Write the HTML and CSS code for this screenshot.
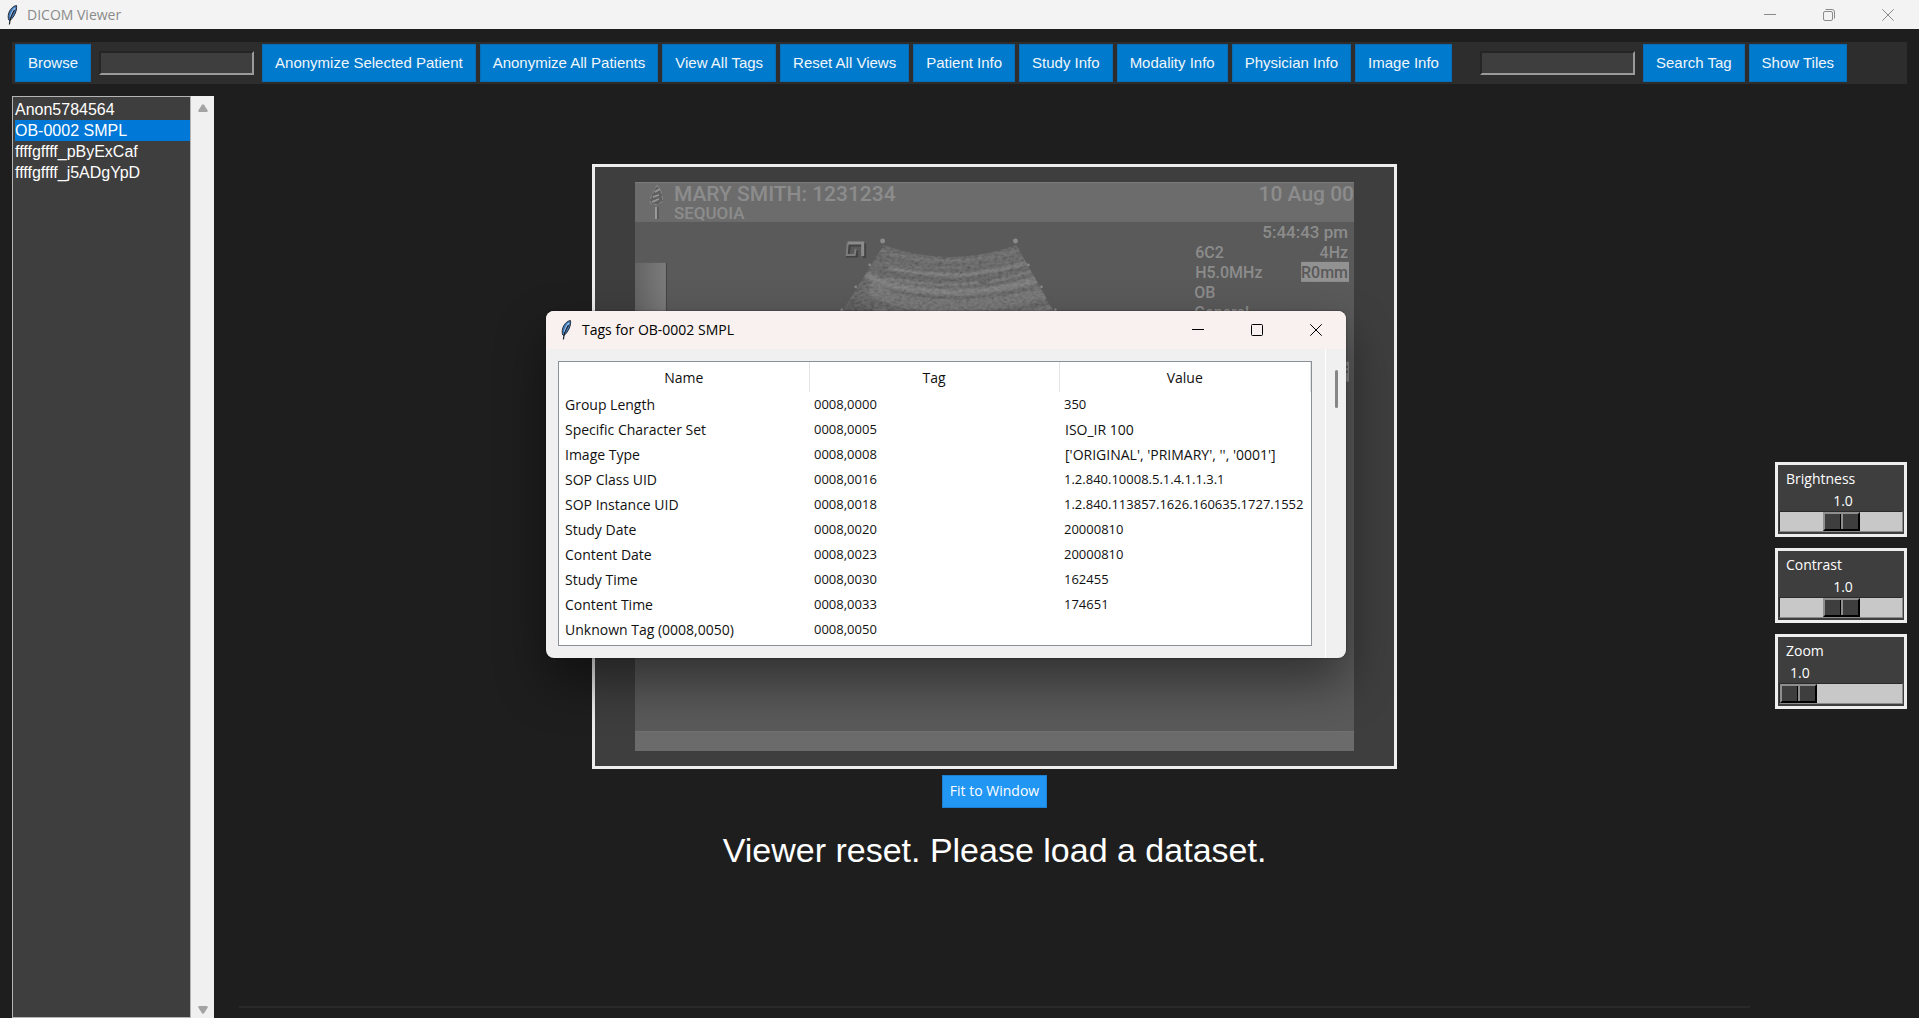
FILE: index.html
```html
<!DOCTYPE html>
<html lang="en">
<head>
<meta charset="utf-8">
<title>DICOM Viewer</title>
<link rel="stylesheet" href="styles.css">
</head>
<body>
<svg class="defs" aria-hidden="true">
  <symbol id="feather" viewBox="0 0 12 20">
    <path d="M10.500 .5C7 1 3.500 4.500 2.500 9c-.4 2-.5 4 .3 6L4 15.500C7 13 9.500 9 10.300 5c.3-1.700.5-3 .2-4.500z" fill="#3f78b8" stroke="#28303c" stroke-width="1"/>
    <path d="M9 3C7 5 5.500 8 4.500 12" stroke="#9cc4ee" stroke-width="1.500" fill="none"/>
    <path d="M8.500 5C6 9 4 13 3.400 19.500" stroke="#1c2028" stroke-width="1.200" fill="none"/>
  </symbol>
  <symbol id="minimize" viewBox="0 0 12 12"><path d="M0 5.500h12" stroke="currentColor"/></symbol>
  <symbol id="maximize" viewBox="0 0 12 12"><rect x=".5" y=".5" width="11" height="11" rx="1" fill="none" stroke="currentColor"/></symbol>
  <symbol id="restore" viewBox="0 0 12 12"><rect x=".5" y="2.500" width="9" height="9" rx="1.500" fill="none" stroke="currentColor"/><path d="M2.500 .5H9a2.500 2.500 0 0 1 2.500 2.500v6.500" fill="none" stroke="currentColor"/></symbol>
  <symbol id="close" viewBox="0 0 12 12"><path d="M.3 .3l11.400 11.400M11.700 .3L.3 11.700" stroke="currentColor"/></symbol>
</svg>

<header class="titlebar">
  <svg class="app-icon"><use href="#feather"/></svg>
  <h1 class="title">DICOM Viewer</h1>
  <div class="window-controls">
    <button aria-label="Minimize"><svg><use href="#minimize"/></svg></button>
    <button aria-label="Restore"><svg><use href="#restore"/></svg></button>
    <button aria-label="Close"><svg><use href="#close"/></svg></button>
  </div>
</header>

<nav class="toolbar">
  <button class="tool">Browse</button>
  <input class="entry" type="text" aria-label="Dataset path">
  <div class="tool-group">
    <button class="tool">Anonymize Selected Patient</button>
    <button class="tool">Anonymize All Patients</button>
    <button class="tool">View All Tags</button>
    <button class="tool">Reset All Views</button>
    <button class="tool">Patient Info</button>
    <button class="tool">Study Info</button>
    <button class="tool">Modality Info</button>
    <button class="tool">Physician Info</button>
    <button class="tool">Image Info</button>
  </div>
  <input class="entry search" type="text" aria-label="Tag to search">
  <div class="tool-group">
    <button class="tool">Search Tag</button>
    <button class="tool">Show Tiles</button>
  </div>
</nav>

<main class="workspace">
  <aside class="patients">
    <ul class="patient-list">
      <li>Anon5784564</li>
      <li class="selected">OB-0002 SMPL</li>
      <li>ffffgffff_pByExCaf</li>
      <li>ffffgffff_j5ADgYpD</li>
    </ul>
    <div class="list-scroll">
      <svg viewBox="0 0 10 8"><path d="M4 .8Q5-.4 6 .8L9.700 6.500Q10 8 8.500 8h-7Q0 8 .3 6.500z" fill="#a3a3a3"/></svg>
      <svg viewBox="0 0 10 8"><path d="M4 7.200Q5 8.400 6 7.200L9.700 1.500Q10 0 8.500 0h-7Q0 0 .3 1.500z" fill="#a3a3a3"/></svg>
    </div>
  </aside>

  <section class="viewer">
    <div class="canvas">
      <svg class="scan" viewBox="0 0 720 570" role="img" aria-label="Ultrasound image">
        <defs>
          <linearGradient id="bar"><stop offset="0" stop-color="#646464"/><stop offset="1" stop-color="#7b7b7b"/></linearGradient>
          <filter id="speckle" x="0" y="0" width="1" height="1">
            <feTurbulence type="fractalNoise" baseFrequency=".25 .4" numOctaves="3" seed="4"/>
            <feColorMatrix values="1 0 0 0 -.1 1 0 0 0 -.1 1 0 0 0 -.1 0 0 0 0 1"/>
          </filter>
          <filter id="soft"><feGaussianBlur stdDeviation="1.200"/></filter>
          <clipPath id="fan"><path d="M249 63Q316 87 382 63L425 140H201z"/></clipPath>
        </defs>
        <rect width="720" height="570" fill="#5a5a5a"/>
        <rect width="720" height="40" fill="#6c6c6c"/>
        <path d="M0 .5h720" stroke="#7a7a7a"/>
        <rect y="550" width="720" height="20" fill="#6b6b6b"/>
        <path d="M0 550.500h720" stroke="#747474"/>
        <rect y="81" width="31" height="60" fill="url(#bar)"/>
        <path d="M31.500 81v60" stroke="#444"/>
        <g clip-path="url(#fan)">
          <rect x="200" y="60" width="230" height="80" fill="#595959"/>
          <g fill="none" stroke="#7c7c7c" filter="url(#soft)">
            <path d="M245 69Q316 90 386 68" stroke="#6a6a6a" stroke-width="3"/>
            <path d="M240 80Q316 94 392 75" stroke="#666" stroke-width="2"/>
            <path d="M254 86Q290 94 330 93Q370 88 396 80" stroke-width="3"/>
            <path d="M250 96Q300 106 345 101" stroke-width="2"/>
            <path d="M355 100Q385 94 402 88" stroke-width="2"/>
            <path d="M232 92Q246 104 285 108Q345 116 410 96" stroke-width="7" stroke="#767676"/>
            <path d="M234 105Q260 124 320 124Q380 122 418 108" stroke-width="13" stroke="#6c6c6c"/>
            <path d="M240 132Q320 146 424 128" stroke-width="12" stroke="#686868"/>
          </g>
          <path d="M200 118Q226 112 250 140H196z" fill="#505050" filter="url(#soft)"/>
          <rect x="200" y="60" width="230" height="80" filter="url(#speckle)" opacity=".2"/>
        </g>
        <g fill="#8a8a8a">
          <circle cx="248" cy="59" r="2.500"/><circle cx="381" cy="59" r="2.500"/>
          <circle cx="235" cy="83" r="1.300"/><circle cx="221" cy="105" r="1.300"/><circle cx="207" cy="128" r="1.300"/>
          <circle cx="394" cy="83" r="1.300"/><circle cx="407" cy="105" r="1.300"/><circle cx="421" cy="128" r="1.300"/>
        </g>
        <path d="M229 75V62h-15l-2 11h9v-6" fill="none" stroke="#434343" stroke-width="3" transform="translate(1 1)"/>
        <path d="M213 61h15v13" fill="none" stroke="#8c8c8c" stroke-width="3"/>
        <path d="M213 61l-1 12h8l1-6" fill="none" stroke="#7c7c7c" stroke-width="2"/>
        <path d="M22 3l4 6 1 5 1 5-6 4-7-2 1-6 3-6z" fill="#606060" stroke="#888" stroke-width="1" stroke-dasharray="4 2"/>
        <path d="M20 10l5-3M18 15l6-2M17 20l7-3" stroke="#999" stroke-width="1.500"/>
        <path d="M21 25v12" stroke="#999" stroke-width="2"/><path d="M23 25v12" stroke="#484848"/>
        <g class="scan-text">
          <text class="scan-large" x="39" y="19">MARY SMITH: 1231234</text>
          <text class="scan-medium" x="39" y="37">SEQUOIA</text>
          <text class="scan-large" x="720" y="19" text-anchor="end">10 Aug 00</text>
          <text class="scan-medium" x="714" y="56" text-anchor="end">5:44:43 pm</text>
          <text class="scan-small" x="561" y="76">6C2</text>
          <text class="scan-small" x="714" y="76" text-anchor="end">4Hz</text>
          <text class="scan-small" x="561" y="96">H5.0MHz</text>
          <rect x="667" y="80" width="48" height="20" fill="#929292"/>
          <text class="scan-small dark" x="714" y="96" text-anchor="end">R0mm</text>
          <text class="scan-small" x="560" y="116">OB</text>
          <text class="scan-small" x="560" y="136">General</text>
        </g>
        <rect x="706" y="180" width="9" height="20" fill="#8a8a8a"/>
        <path d="M712 185h2M712 190h2" stroke="#5a5a5a" stroke-width="2"/>
      </svg>
    </div>
    <button class="fit">Fit to Window</button>
    <p class="status">Viewer reset. Please load a dataset.</p>
  </section>

  <aside class="adjust">
    <div class="scale">
      <label for="brightness">Brightness</label>
      <output class="mid" for="brightness">1.0</output>
      <input id="brightness" type="range" min="0" max="2" step="0.1" value="1">
    </div>
    <div class="scale">
      <label for="contrast">Contrast</label>
      <output class="mid" for="contrast">1.0</output>
      <input id="contrast" type="range" min="0" max="2" step="0.1" value="1">
    </div>
    <div class="scale">
      <label for="zoom">Zoom</label>
      <output for="zoom">1.0</output>
      <input id="zoom" type="range" min="1" max="5" step="0.1" value="1">
    </div>
  </aside>
</main>

<section class="dialog" role="dialog" aria-labelledby="dialog-title">
  <header class="dialog-bar">
    <svg class="app-icon"><use href="#feather"/></svg>
    <h2 class="title" id="dialog-title">Tags for OB-0002 SMPL</h2>
    <div class="window-controls">
      <button aria-label="Minimize"><svg><use href="#minimize"/></svg></button>
      <button aria-label="Maximize"><svg><use href="#maximize"/></svg></button>
      <button aria-label="Close"><svg><use href="#close"/></svg></button>
    </div>
  </header>
  <div class="dialog-body">
    <div class="tree">
      <table>
        <thead><tr><th class="col">Name</th><th class="col">Tag</th><th>Value</th></tr></thead>
        <tbody>
          <tr><td>Group Length</td><td class="num">0008,0000</td><td class="num">350</td></tr>
          <tr><td>Specific Character Set</td><td class="num">0008,0005</td><td>ISO_IR 100</td></tr>
          <tr><td>Image Type</td><td class="num">0008,0008</td><td>['ORIGINAL', 'PRIMARY', '', '0001']</td></tr>
          <tr><td>SOP Class UID</td><td class="num">0008,0016</td><td class="num">1.2.840.10008.5.1.4.1.1.3.1</td></tr>
          <tr><td>SOP Instance UID</td><td class="num">0008,0018</td><td class="num"><div class="clip">1.2.840.113857.1626.160635.1727.1552</div></td></tr>
          <tr><td>Study Date</td><td class="num">0008,0020</td><td class="num">20000810</td></tr>
          <tr><td>Content Date</td><td class="num">0008,0023</td><td class="num">20000810</td></tr>
          <tr><td>Study Time</td><td class="num">0008,0030</td><td class="num">162455</td></tr>
          <tr><td>Content Time</td><td class="num">0008,0033</td><td class="num">174651</td></tr>
          <tr><td>Unknown Tag (0008,0050)</td><td class="num">0008,0050</td><td></td></tr>
        </tbody>
      </table>
    </div>
    <div class="dialog-scroll"><div class="thumb"></div></div>
  </div>
</section>
</body>
</html>
```
FILE: styles.css
```css
* { box-sizing: border-box; }

body {
  margin: 0;
  min-height: 100vh;
  display: flex;
  flex-direction: column;
  position: relative;
  background: #1e1e1e;
  color: #fff;
  font-family: "Open Sans", "Noto Sans", sans-serif;
  font-size: 14px;
}

button, input { font: inherit; margin: 0; }
.defs { position: absolute; width: 0; height: 0; }

/* window chrome */
.titlebar, .dialog-bar { display: flex; align-items: center; }
.titlebar { height: 29px; padding: 0 2px 0 6px; background: #f3f3f3; color: #8a8a8a; }
.app-icon { width: 12px; height: 20px; }
.title { margin: 0 0 0 9px; font-size: 14px; font-weight: 400; line-height: 20px; }
.window-controls { display: flex; margin-left: auto; align-self: stretch; }
.window-controls button {
  width: 59px;
  padding: 0;
  border: 0;
  background: none;
  color: inherit;
  display: flex;
  align-items: center;
  justify-content: center;
}
.window-controls svg { width: 12px; height: 12px; }

/* toolbar */
.toolbar {
  display: flex;
  align-items: center;
  margin: 13px 12px 0;
  padding: 2px 3px;
  background: #2d2d2d;
  font-family: "Liberation Sans", Arial, sans-serif;
  font-size: 15px;
}
.tool-group { display: flex; gap: 4px; }
.tool {
  height: 38px;
  padding: 0 12px 2px;
  border: 1px solid #0a6cb4;
  background: #007acc;
  color: #f0f6fb;
  white-space: nowrap;
}
.entry {
  width: 155px;
  height: 24px;
  margin: 0 8px;
  border: 2px solid;
  border-color: #252525 #9a9a9a #9a9a9a #252525;
  background: #3e3e3e;
  color: #fff;
}
.search { margin-left: 28px; }

/* workspace */
.workspace { flex: 1; display: flex; padding: 12px 12px 0; }
.patients { display: flex; width: 202px; }
.patient-list {
  flex: 1;
  margin: 0;
  padding: 2px 0 2px 2px;
  list-style: none;
  border: 1px solid #b4b4b4;
  background: #3e3e3e;
  font-family: "Liberation Sans", Arial, sans-serif;
  font-size: 16px;
  line-height: 21px;
  font-variant-ligatures: none;
}
.patient-list .selected { background: #0078d7; }
.list-scroll {
  width: 23px;
  padding: 8px 0 4px;
  display: flex;
  flex-direction: column;
  align-items: center;
  justify-content: space-between;
  background: #f0f0f0;
}
.list-scroll svg { width: 10px; height: 8px; }

.viewer {
  flex: 1;
  display: flex;
  flex-direction: column;
  align-items: center;
  margin: 0 25px 10px;
  padding-top: 68px;
  border-bottom: 2px solid #292929;
}
.canvas {
  width: 805px;
  max-width: 100%;
  padding: 15px 40px;
  border: 3px solid #eee;
  background: #3e3e3e;
}
.scan { display: block; width: 100%; }
.scan-text { fill: #8c8c8c; font-family: "Roboto", sans-serif; font-weight: 500; }
.scan-large { font-size: 21px; }
.scan-medium { font-size: 17px; }
.scan-small { font-size: 16px; }
.dark { fill: #5a5a5a; }

.fit {
  height: 33px;
  margin-top: 6px;
  padding: 0 7px 2px;
  border: 1px solid #1c7fd0;
  background: #2196f3;
  color: #fff;
}
.status {
  margin: 22px 0 0;
  font-family: "Liberation Sans", Arial, sans-serif;
  font-size: 34px;
  line-height: 40px;
}

/* sliders */
.adjust {
  display: flex;
  flex-direction: column;
  justify-content: center;
  gap: 11px;
  width: 132px;
  padding-top: 57px;
}
.scale {
  display: flex;
  flex-direction: column;
  height: 75px;
  padding: 2px 1px 0;
  border: 3px solid #eee;
  background: #3e3e3e;
}
.scale label { padding-left: 7px; line-height: 23px; }
.scale output { padding-left: 11px; line-height: 21px; }
.scale .mid { padding: 0 0 0 4px; text-align: center; }
.scale input {
  appearance: none;
  width: 100%;
  height: 21px;
  border: 1px solid;
  border-color: #2a2a2a #8a8a8a #8a8a8a #2a2a2a;
  background: #c8c8c8;
}
.scale input::-webkit-slider-thumb {
  appearance: none;
  width: 37px;
  height: 19px;
  border: 2px solid;
  border-color: #8e8e8e #000 #000 #8e8e8e;
  background: linear-gradient(90deg, #3e3e3e 15px, #000 15px 16px, #8e8e8e 16px 18px, #3e3e3e 18px);
}

/* tag window */
.dialog {
  position: absolute;
  left: 546px;
  top: 311px;
  width: 800px;
  border-radius: 8px;
  overflow: hidden;
  background: #f0f0f0;
  color: #111;
  box-shadow: 0 24px 50px rgba(0, 0, 0, .45), 0 0 2px rgba(0, 0, 0, .5);
}
.dialog-bar { height: 38px; padding: 0 1px 0 14px; background: #f9f1ef; color: #000; }
.dialog-bar .title { margin-left: 10px; }
.dialog-body { display: flex; height: 309px; }
.tree {
  flex: 1;
  margin: 12px 13px 12px 12px;
  border: 1px solid #8a8f98;
  background: #fff;
  overflow: hidden;
}
.tree table { width: 100%; border-collapse: collapse; table-layout: fixed; }
.tree th, .tree td { height: 25px; padding: 0 6px; line-height: 19px; text-align: left; white-space: nowrap; }
.tree th { height: 30px; padding: 0; font-weight: 400; text-align: center; border-right: 1px solid #e4e4e4; }
.tree .col { width: 250px; }
.tree .num { font-size: 13px; padding-left: 5px; }
.clip { overflow: hidden; }
.dialog-scroll { width: 21px; padding: 21px 0 0 9px; border-left: 1px solid #fff; }
.thumb { width: 3px; height: 38px; border-radius: 2px; background: #868686; }
```
